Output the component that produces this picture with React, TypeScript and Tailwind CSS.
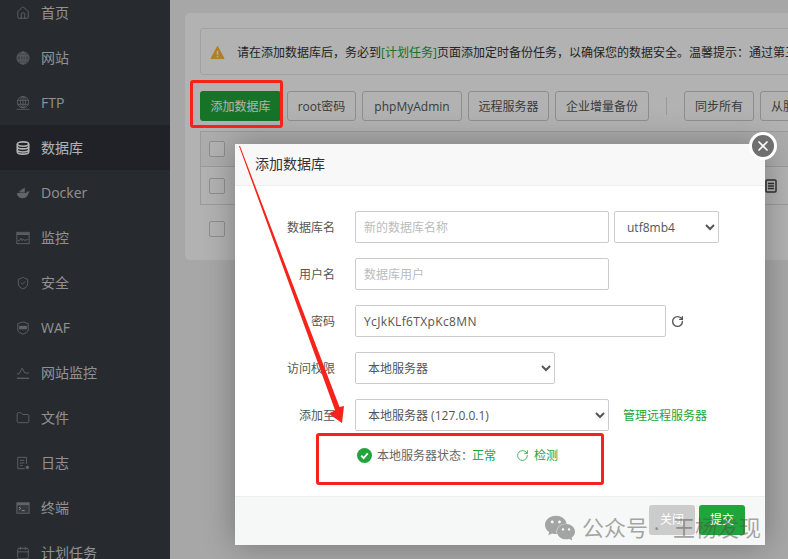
import React from "react";
import { Calendar, Folder, House, RotateCw, ShieldCheck, X } from "lucide-react";
import { SiWechat } from "react-icons/si";

const iconClass = "h-[14px] w-[14px]";

const GridGlobeIcon = () => (
  <svg viewBox="0 0 16 16" className={iconClass} fill="none" stroke="currentColor" strokeWidth="0.8">
    <circle cx="8" cy="8" r="7" fill="currentColor" fillOpacity="0.45" />
    <ellipse cx="8" cy="8" rx="3" ry="7" />
    <path d="M8 1v14M1.500 5.500h13M1.500 10.500h13" />
  </svg>
);

const FtpIcon = () => (
  <svg viewBox="0 0 16 16" className={iconClass} fill="none" stroke="currentColor" strokeWidth="0.9">
    <circle cx="8" cy="7" r="6.500" />
    <ellipse cx="8" cy="7" rx="3" ry="6.500" />
    <path d="M8 .5v13M1.500 5h13M1.500 9.500h13M.5 15.200h15" />
  </svg>
);

const DatabaseIcon = () => (
  <svg viewBox="0 0 16 16" className={iconClass} fill="none" stroke="currentColor" strokeWidth="1.800">
    <ellipse cx="8" cy="3.500" rx="6.500" ry="2.500" />
    <path d="M1.500 3.500v9c0 1.400 3 2.500 6.500 2.500s6.500-1.100 6.500-2.500v-9" />
    <path d="M1.500 6.500c0 1.400 3 2.500 6.500 2.500s6.500-1.100 6.500-2.500M1.500 10c0 1.400 3 2.500 6.500 2.500s6.500-1.100 6.500-2.500" />
  </svg>
);

const DockerIcon = () => (
  <svg viewBox="0 0 16 16" className={iconClass} fill="currentColor">
    <path d="M1 8h10.500l1-1.500L15.500 6l-1.500 3c-1 3-3.500 5-6.500 5C4 14 1 11.500 1 8z" />
    <path d="M4 7.500V5h2.500V3H9V1.500l1 1V7.500z" />
  </svg>
);

const MonitorIcon = () => (
  <svg viewBox="0 0 16 16" className={iconClass} fill="none" stroke="currentColor">
    <rect x="1" y="1.500" width="14" height="13" />
    <path d="M1 3.500h14" strokeWidth="2" />
    <path d="M2 11h2l1.500-3L7 11l1.500-2L10 11l1.500-1H14" />
  </svg>
);

const WafIcon = () => (
  <svg viewBox="0 0 16 16" className={iconClass} fill="none" stroke="currentColor">
    <path d="M8 1l6 2v7c0 2.500-3 4-6 5-3-1-6-2.500-6-5V3z" />
    <path d="M4 6h8v3H4z" fill="currentColor" />
  </svg>
);

const WaveIcon = () => (
  <svg viewBox="0 0 16 16" className={iconClass} fill="none" stroke="currentColor">
    <path d="M1 9h2.500L7 2.500 10 8h5" />
    <path d="M1 14h14" strokeWidth="1.400" />
  </svg>
);

const LogIcon = () => (
  <svg viewBox="0 0 16 16" className={iconClass} fill="none" stroke="currentColor">
    <path d="M12 9V1.500H2v13h8" />
    <path d="M4.500 5h5M4.500 8h5M4.500 11h3" />
    <circle cx="13" cy="13" r="1.500" fill="currentColor" />
  </svg>
);

const TerminalIcon = () => (
  <svg viewBox="0 0 16 16" className={iconClass} fill="none" stroke="currentColor">
    <rect x="1" y="2" width="14" height="12" fill="currentColor" fillOpacity="0.25" />
    <path d="M1 3.500h14" strokeWidth="2.500" />
    <path d="M3.500 7l2 1.500-2 1.500M6.500 11H10" stroke="#d0d0d0" />
  </svg>
);

const menu = [
  { name: "首页", icon: <House size={14} strokeWidth={1.500} /> },
  { name: "网站", icon: <GridGlobeIcon /> },
  { name: "FTP", icon: <FtpIcon /> },
  { name: "数据库", icon: <DatabaseIcon />, active: true },
  { name: "Docker", icon: <DockerIcon /> },
  { name: "监控", icon: <MonitorIcon /> },
  { name: "安全", icon: <ShieldCheck size={14} strokeWidth={1.500} /> },
  { name: "WAF", icon: <WafIcon /> },
  { name: "网站监控", icon: <WaveIcon /> },
  { name: "文件", icon: <Folder size={14} strokeWidth={1.500} /> },
  { name: "日志", icon: <LogIcon /> },
  { name: "终端", icon: <TerminalIcon /> },
  { name: "计划任务", icon: <Calendar size={14} strokeWidth={1.500} /> },
];

const Sidebar = () => (
  <div className="w-[170px] shrink-0 -mt-[10px] bg-[#383e45]">
    {menu.map((item) => (
      <div
        key={item.name}
        className={
          item.active
            ? "flex h-[45px] items-center gap-[11px] pl-[16px] bg-[#2e3238] text-white text-[14px]"
            : "flex h-[45px] items-center gap-[11px] pl-[16px] text-[#d0d0d0] text-[14px]"
        }
      >
        <span className={item.active ? "text-white" : "text-[#8c9095]"}>{item.icon}</span>
        {item.name}
      </div>
    ))}
  </div>
);

const ToolButton = ({ label, width }: { label: string; width: string }) => (
  <button className={`${width} h-[30px] shrink-0 rounded-[3px] border border-[#ccc] bg-white pt-[1px] text-[12px] text-[#555]`}>
    {label}
  </button>
);

const Checkbox = () => <div className="h-[16px] w-[16px] shrink-0 rounded-[2px] border border-[#ccc] bg-white" />;

const Main = () => (
  <div className="flex-1 min-w-0 overflow-hidden bg-[#f0f0f0] pl-[15px] pt-[13px]">
    <div className="w-[700px] h-[247px] rounded-[5px] bg-white pl-[15px] pt-[15px]">
      <div className="flex h-[47px] items-center gap-[12px] rounded-[3px] border border-[#e8e8e8] pl-[9px] pt-[2px] text-[12px] text-[#333] whitespace-nowrap">
        <svg viewBox="0 0 16 16" className="h-[15px] w-[15px] shrink-0">
          <path d="M8 1.500l7 13H1z" fill="#ffb52d" stroke="#ffb52d" strokeLinejoin="round" />
          <path d="M7.200 6h1.600v4.500H7.200zM7.200 11.500h1.600v1.600H7.200z" fill="#fff" />
        </svg>
        <span>
          请在添加数据库后，务必到<span className="text-[#20a53a]">[计划任务]</span>页面添加定时备份任务，以确保您的数据安全。温馨提示：通过第三方
        </span>
      </div>
      <div className="mt-[16px] flex items-center gap-[6px]">
        <button className="h-[30px] w-[81px] shrink-0 rounded-[3px] bg-[#20a53a] pt-[1px] text-[12px] text-white">添加数据库</button>
        <ToolButton label="root密码" width="w-[69px]" />
        <ToolButton label="phpMyAdmin" width="w-[100px]" />
        <ToolButton label="远程服务器" width="w-[81px]" />
        <ToolButton label="企业增量备份" width="w-[94px]" />
        <div className="mx-[11px] h-[18px] w-px shrink-0 bg-[#ddd]" />
        <ToolButton label="同步所有" width="w-[70px]" />
        <ToolButton label="从服务器获取" width="w-[94px]" />
      </div>
      <div className="mt-[10px] border border-b-0 border-[#ddd]">
        <div className="flex h-[35px] items-center border-b border-[#ddd] bg-[#f6f6f6] pl-[8px]">
          <Checkbox />
        </div>
        <div className="flex h-[38px] items-center border-b border-[#ddd] pl-[8px]">
          <Checkbox />
          <svg viewBox="0 0 12 14" className="ml-[540px] h-[14px] w-[12px] text-[#444]" fill="none" stroke="currentColor" strokeWidth="1.500">
            <rect x="1" y="1" width="10" height="12" rx="1" />
            <path d="M3 4.500h6M3 7h6M3 9.500h6" />
          </svg>
        </div>
      </div>
      <div className="flex h-[48px] items-center pl-[9px]">
        <Checkbox />
      </div>
    </div>
  </div>
);

const Field = ({ label, children }: { label: string; children: React.ReactNode }) => (
  <div className="flex h-[32px] items-center">
    <label className="w-[100px] pt-[1px] text-right text-[12px] text-[#555]">{label}</label>
    <div className="ml-[20px] flex items-center">{children}</div>
  </div>
);

const inputClass =
  "h-[32px] rounded-[2px] border border-[#ccc] bg-white pl-[8px] text-[12px] text-[#555] placeholder:text-[#bbb] outline-none";
const selectClass = "h-[32px] rounded-[2px] border border-[#ccc] bg-white pl-[8px] text-[12px] text-[#555]";

const Modal = () => (
  <div className="absolute left-[235px] top-[144px] flex h-[401px] w-[530px] flex-col bg-white shadow-[0_0_30px_rgba(0,0,0,0.3)]">
    <div className="flex h-[42px] shrink-0 items-center border-b border-[#eee] bg-[#f8f8f8] pb-[2px] pl-[20px] text-[14px] text-[#333]">
      添加数据库
    </div>
    <div className="flex flex-1 flex-col pt-[25px]">
      <div className="flex flex-col gap-[15px]">
        <Field label="数据库名">
          <input className={`${inputClass} w-[254px]`} placeholder="新的数据库名称" />
          <select className={`${selectClass} ml-[5px] w-[105px]`} defaultValue="utf8mb4">
            <option>utf8mb4</option>
          </select>
        </Field>
        <Field label="用户名">
          <input className={`${inputClass} w-[254px]`} placeholder="数据库用户" />
        </Field>
        <Field label="密码">
          <input className={`${inputClass} w-[311px] tracking-[0.35px]`} defaultValue="YcJkKLf6TXpKc8MN" />
          <RotateCw size={13} strokeWidth={2.500} className="ml-[5px] text-[#555]" />
        </Field>
        <Field label="访问权限">
          <select className={`${selectClass} w-[200px]`} defaultValue="本地服务器">
            <option>本地服务器</option>
          </select>
        </Field>
        <Field label="添加至">
          <select className={`${selectClass} w-[254px]`} defaultValue="本地服务器 (127.0.0.1)">
            <option>本地服务器 (127.0.0.1)</option>
          </select>
          <span className="ml-[14px] pt-[1px] text-[12px] text-[#20a53a]">管理远程服务器</span>
        </Field>
      </div>
      <div className="mt-[16px] flex h-[16px] items-center pl-[122px] text-[12px] text-[#666]">
        <svg viewBox="0 0 16 16" className="h-[15px] w-[15px]">
          <circle cx="8" cy="8" r="8" fill="#20a53a" />
          <path d="M4.500 8.200l2.500 2.500 4.500-5" fill="none" stroke="#fff" strokeWidth="2" />
        </svg>
        <span className="ml-[5px] pt-[1px]">本地服务器状态：</span>
        <span className="-ml-[1px] pt-[1px] text-[#20a53a]">正常</span>
        <RotateCw size={13} strokeWidth={1.500} className="ml-[20px] text-[#20a53a]" />
        <span className="ml-[5px] pt-[1px] text-[#20a53a]">检测</span>
      </div>
    </div>
    <div className="flex h-[49px] shrink-0 items-start justify-end gap-[4px] border-t border-[#eee] bg-[#f6f8f8] pr-[20px] pt-[8px]">
      <button className="h-[30px] w-[46px] rounded-[3px] bg-[#ccc] text-[12px] text-white">关闭</button>
      <button className="h-[30px] w-[46px] rounded-[3px] bg-[#20a53a] text-[12px] text-white">提交</button>
    </div>
    <div className="absolute -right-[12px] -top-[12px] flex h-[28px] w-[28px] items-center justify-center rounded-full border-[3px] border-white bg-[#6f6f6f]">
      <X size={16} strokeWidth={2.500} className="text-white" />
    </div>
  </div>
);

const App = () => {
  return (
    <div
      className="relative flex h-[559px] w-[788px] overflow-hidden"
      style={{ fontFamily: '"Open Sans", "Noto Sans CJK SC", sans-serif' }}
    >
      <Sidebar />
      <Main />
      <div className="absolute inset-0 bg-black/30" />
      <Modal />

      {/* red marks drawn on top of the screenshot */}
      <div className="absolute left-[190px] top-[80px] h-[48px] w-[93px] rounded-[3px] border-[3px] border-[#f5231b]" />
      <div className="absolute left-[316px] top-[433px] h-[52px] w-[288px] rounded-[3px] border-[3px] border-[#f5231b]" />
      <svg className="absolute left-0 top-0 h-[559px] w-[788px] pointer-events-none" viewBox="0 0 788 559">
        <polygon points="239,146 240,146 339.500,407 344,406 342,423 329,414 335,410" fill="#f5231b" />
      </svg>

      {/* watermark */}
      <div className="absolute left-[545px] top-[511px] flex items-center text-[22px] text-[#505050]/50">
        <SiWechat size={30} />
        <span className="ml-[7px] w-[91px] whitespace-pre">公众号 ·</span>
        <span>王杨发现</span>
      </div>
    </div>
  );
};

export default App;
